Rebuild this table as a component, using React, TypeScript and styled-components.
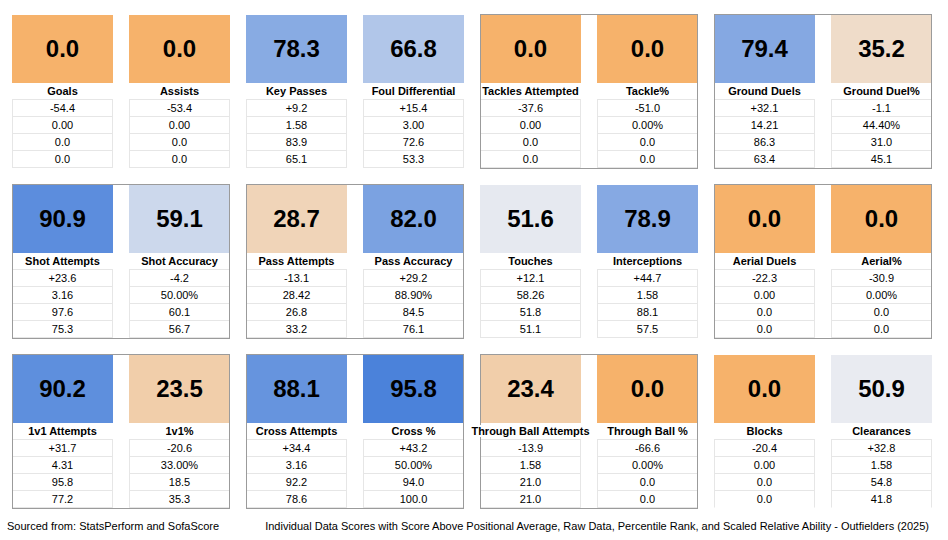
import styled, { createGlobalStyle } from 'styled-components';

type Metric = {
  label: string;
  score: number;
  rows: string[];
};

type Group = {
  boxed: boolean;
  openBottom?: boolean;
  metrics: [Metric, Metric];
};

const GlobalStyle = createGlobalStyle`
  html, body {
    margin: 0;
    padding: 0;
    background: #ffffff;
  }
  body {
    font-family: "Liberation Sans", Arial, sans-serif;
    color: #000000;
  }
`;

const Page = styled.div`
  width: 948px;
  height: 540px;
  padding: 15px 0 0 12px;
  box-sizing: border-box;
  display: flex;
  flex-direction: column;
`;

const Board = styled.div`
  display: grid;
  grid-template-columns: repeat(4, 218px);
  grid-auto-rows: 153px;
  column-gap: 16px;
  row-gap: 17px;
`;

const GroupBox = styled.div<{ $boxed: boolean }>`
  position: relative;
  display: grid;
  grid-template-columns: 101px 101px;
  column-gap: 16px;

  &::after {
    content: '';
    display: ${(p) => (p.$boxed ? 'block' : 'none')};
    position: absolute;
    inset: -1px 0 -1px 0;
    border: 1px solid #9b9b9b;
    pointer-events: none;
  }
`;

const Card = styled.div`
  display: flex;
  flex-direction: column;
`;

const ScoreTile = styled.div<{ $bg: string }>`
  height: 68px;
  background: ${(p) => p.$bg};
  display: flex;
  align-items: center;
  justify-content: center;
  font-size: 24px;
  font-weight: bold;
`;

const Label = styled.div`
  height: 16px;
  display: flex;
  align-items: center;
  justify-content: center;
  font-size: 11px;
  font-weight: bold;
  white-space: nowrap;

  span {
    position: relative;
    z-index: 1;
    background: #ffffff;
  }
`;

const Stats = styled.div<{ $open: boolean }>`
  border-top: 1px solid #e6e6e6;

  & > div:last-child {
    border-bottom-color: ${(p) => (p.$open ? 'transparent' : '#e6e6e6')};
  }
`;

const Cell = styled.div`
  height: 16px;
  line-height: 16px;
  border: 1px solid #e6e6e6;
  border-top: none;
  text-align: center;
  font-size: 11px;
`;

const Footer = styled.div`
  display: flex;
  justify-content: space-between;
  margin: 11px 19px 0 -5px;
  font-size: 11px;
  line-height: 14px;
`;

const ORANGE = [246, 178, 107];
const MID = [236, 237, 241];
const BLUE = [60, 120, 216];

function scoreColor(score: number) {
  const lerp = (a: number[], b: number[], t: number) =>
    a.map((v, i) => Math.round(v + (b[i] - v) * t));
  const rgb = score <= 50 ? lerp(ORANGE, MID, score / 50) : lerp(MID, BLUE, (score - 50) / 50);
  return `rgb(${rgb.join(',')})`;
}

const m = (label: string, score: number, rows: string[]): Metric => ({ label, score, rows });

const groups: Group[] = [
  { boxed: false, metrics: [m('Goals', 0, ['-54.4', '0.00', '0.0', '0.0']), m('Assists', 0, ['-53.4', '0.00', '0.0', '0.0'])] },
  { boxed: false, metrics: [m('Key Passes', 78.3, ['+9.2', '1.58', '83.9', '65.1']), m('Foul Differential', 66.8, ['+15.4', '3.00', '72.6', '53.3'])] },
  { boxed: true, metrics: [m('Tackles Attempted', 0, ['-37.6', '0.00', '0.0', '0.0']), m('Tackle%', 0, ['-51.0', '0.00%', '0.0', '0.0'])] },
  { boxed: true, metrics: [m('Ground Duels', 79.4, ['+32.1', '14.21', '86.3', '63.4']), m('Ground Duel%', 35.2, ['-1.1', '44.40%', '31.0', '45.1'])] },

  { boxed: true, metrics: [m('Shot Attempts', 90.9, ['+23.6', '3.16', '97.6', '75.3']), m('Shot Accuracy', 59.1, ['-4.2', '50.00%', '60.1', '56.7'])] },
  { boxed: true, metrics: [m('Pass Attempts', 28.7, ['-13.1', '28.42', '26.8', '33.2']), m('Pass Accuracy', 82.0, ['+29.2', '88.90%', '84.5', '76.1'])] },
  { boxed: false, metrics: [m('Touches', 51.6, ['+12.1', '58.26', '51.8', '51.1']), m('Interceptions', 78.9, ['+44.7', '1.58', '88.1', '57.5'])] },
  { boxed: true, metrics: [m('Aerial Duels', 0, ['-22.3', '0.00', '0.0', '0.0']), m('Aerial%', 0, ['-30.9', '0.00%', '0.0', '0.0'])] },

  { boxed: true, metrics: [m('1v1 Attempts', 90.2, ['+31.7', '4.31', '95.8', '77.2']), m('1v1%', 23.5, ['-20.6', '33.00%', '18.5', '35.3'])] },
  { boxed: true, metrics: [m('Cross Attempts', 88.1, ['+34.4', '3.16', '92.2', '78.6']), m('Cross %', 95.8, ['+43.2', '50.00%', '94.0', '100.0'])] },
  { boxed: true, metrics: [m('Through Ball Attempts', 23.4, ['-13.9', '1.58', '21.0', '21.0']), m('Through Ball %', 0, ['-66.6', '0.00%', '0.0', '0.0'])] },
  { boxed: false, openBottom: true, metrics: [m('Blocks', 0, ['-20.4', '0.00', '0.0', '0.0']), m('Clearances', 50.9, ['+32.8', '1.58', '54.8', '41.8'])] },
];

function MetricCard({ metric, open }: { metric: Metric; open: boolean }) {
  return (
    <Card>
      <ScoreTile $bg={scoreColor(metric.score)}>{metric.score.toFixed(1)}</ScoreTile>
      <Label>
        <span>{metric.label}</span>
      </Label>
      <Stats $open={open}>
        {metric.rows.map((row, i) => (
          <Cell key={i}>{row}</Cell>
        ))}
      </Stats>
    </Card>
  );
}

export default function App() {
  return (
    <Page>
      <GlobalStyle />
      <Board>
        {groups.map((group, i) => (
          <GroupBox key={i} $boxed={group.boxed}>
            {group.metrics.map((metric) => (
              <MetricCard key={metric.label} metric={metric} open={!!group.openBottom} />
            ))}
          </GroupBox>
        ))}
      </Board>
      <Footer>
        <span>Sourced from: StatsPerform and SofaScore</span>
        <span>
          Individual Data Scores with Score Above Positional Average, Raw Data, Percentile Rank, and Scaled Relative
          Ability - Outfielders (2025)
        </span>
      </Footer>
    </Page>
  );
}
